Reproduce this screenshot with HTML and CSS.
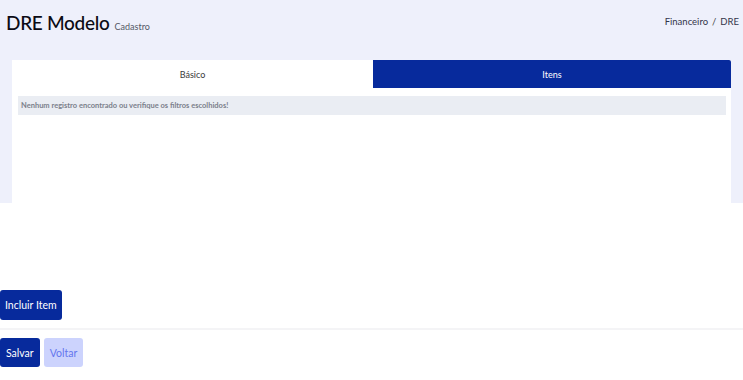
FILE: index.html
```html
<!DOCTYPE html>
<html lang="pt">
<head>
<meta charset="utf-8">
<title>DRE Modelo</title>
<link rel="stylesheet" href="styles.css">
</head>
<body>
<div class="top">
  <header class="header">
    <div class="title-wrap">
      <h1 class="title">DRE Modelo</h1>
      <span class="subtitle">Cadastro</span>
    </div>
    <nav class="breadcrumb">
      <span>Financeiro</span><span class="sep">/</span><span>DRE</span>
    </nav>
  </header>
  <section class="card">
    <div class="tabs">
      <div class="tab tab-active">Básico</div>
      <div class="tab tab-blue">Itens</div>
    </div>
    <div class="card-body">
      <div class="alert">Nenhum registro encontrado ou verifique os filtros escolhidos!</div>
    </div>
  </section>
</div>
<div class="bottom">
  <div class="include-row">
    <button class="btn btn-primary btn-tall">Incluir Item</button>
  </div>
  <div class="divider"></div>
  <div class="actions">
    <button class="btn btn-primary">Salvar</button>
    <button class="btn btn-light">Voltar</button>
  </div>
</div>
</body>
</html>
```

FILE: styles.css
```css
* { box-sizing: border-box; }
html, body { margin: 0; padding: 0; background: #ffffff; }
body {
  font-family: "Lato", "Open Sans", "DejaVu Sans", sans-serif;
  color: #111;
}
.top {
  background: #eef0fb;
  height: 203px;
  overflow: hidden;
}
.header {
  height: 60px;
  display: flex;
  justify-content: space-between;
  align-items: flex-start;
  padding: 0 4px 0 6px;
}
.title-wrap {
  display: flex;
  align-items: baseline;
  gap: 5px;
  padding-top: 11px;
}
.title {
  margin: 0;
  font-size: 19px;
  font-weight: 500;
  color: #0b0b14;
  letter-spacing: -0.3px;
}
.subtitle {
  font-size: 9px;
  color: #555a66;
}
.breadcrumb {
  display: flex;
  gap: 4px;
  font-size: 9.5px;
  color: #33354a;
  padding-top: 16px;
}
.breadcrumb .sep { color: #444; }
.card {
  margin: 0 12px 0 12px;
  background: #ffffff;
  height: 143px;
}
.tabs {
  display: grid;
  grid-template-columns: 361px 1fr;
  height: 28px;
}
.tab {
  display: flex;
  align-items: center;
  justify-content: center;
  font-size: 9px;
}
.tab-active {
  background: #ffffff;
  color: #3a3a3a;
  border-top-left-radius: 3px;
}
.tab-blue {
  background: #072a9c;
  color: #ffffff;
  border-top-right-radius: 2px;
}
.card-body {
  padding: 8px 5px 0 6px;
}
.alert {
  background: #eaedf3;
  height: 19px;
  display: flex;
  align-items: center;
  padding-left: 3px;
  font-size: 7.5px;
  font-weight: 700;
  color: #7b808b;
}
.bottom {
  padding-top: 87px;
}
.include-row { display: flex; }
.btn {
  font-family: "Lato", "Open Sans", sans-serif;
  font-size: 10.5px;
  border: none;
  border-radius: 3px;
  cursor: pointer;
  padding: 0 6px;
  height: 29px;
}
.btn-tall { height: 30px; padding: 0 5px; }
.btn-primary {
  background: #072a9c;
  color: #ffffff;
}
.btn-light {
  background: #ccd3fd;
  color: #6476ee;
  padding: 0 6px;
}
.divider {
  margin-top: 8px;
  height: 2px;
  background: #f4f4f6;
}
.actions {
  display: flex;
  gap: 4px;
  margin-top: 8px;
}
```
